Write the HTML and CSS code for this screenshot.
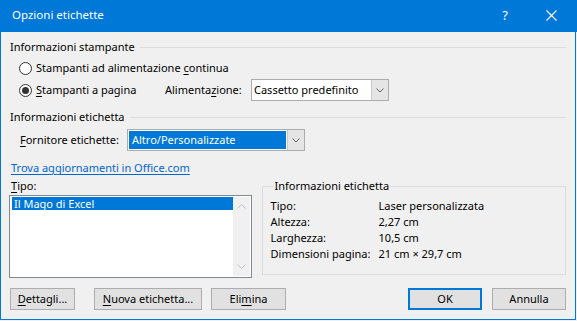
FILE: index.html
```html
<!DOCTYPE html>
<html lang="it">
<head>
<meta charset="utf-8">
<title>Opzioni etichette</title>
<link rel="stylesheet" href="styles.css">
</head>
<body>
<div class="dialog">
  <div class="titlebar">
    <span class="title">Opzioni etichette</span>
    <span class="tb-help">?</span>
    <span class="tb-close">
      <svg width="11" height="11" viewBox="0 0 11 11"><path d="M0.5 0.5 L10.5 10.5 M10.5 0.5 L0.5 10.5" stroke="#fff" stroke-width="1.1" fill="none"/></svg>
    </span>
  </div>
  <div class="content">
    <div class="section s1">
      <span class="section-text">Informazioni stampante</span>
      <span class="rule"></span>
    </div>
    <div class="radio-row r1">
      <span class="radio"></span>
      <span class="radio-label">Stampanti ad alimentazione <u>c</u>ontinua</span>
    </div>
    <div class="radio-row r2">
      <span class="radio checked"></span>
      <span class="radio-label fixed"><u>S</u>tampanti a pagina</span>
      <span class="field-label feed">Alimenta<u>z</u>ione:</span>
      <div class="combo feed-combo">
        <span class="combo-field">Cassetto predefinito</span>
        <span class="combo-btn"><svg width="8" height="5" viewBox="0 0 8 5"><path d="M0.5 0.5 L4 4 L7.5 0.5" stroke="#606060" fill="none"/></svg></span>
      </div>
    </div>
    <div class="section s2">
      <span class="section-text">Informazioni etichetta</span>
      <span class="rule"></span>
    </div>
    <div class="vendor-row">
      <span class="field-label vendor"><u>F</u>ornitore etichette:</span>
      <div class="combo vendor-combo">
        <span class="combo-field"><span class="sel">Altro/Personalizzate</span></span>
        <span class="combo-btn"><svg width="8" height="5" viewBox="0 0 8 5"><path d="M0.5 0.5 L4 4 L7.5 0.5" stroke="#606060" fill="none"/></svg></span>
      </div>
    </div>
    <a class="link" href="#">Trova aggiornamenti in Office.com</a>
    <div class="lower">
      <div class="type-col">
        <span class="type-label"><u>T</u>ipo:</span>
        <div class="listbox">
          <div class="items">
            <div class="item selected">Il Mago di Excel</div>
          </div>
          <div class="scrollbar">
            <svg width="9" height="5" viewBox="0 0 9 5"><path d="M0.5 4.5 L4.5 0.5 L8.5 4.5" stroke="#c4c4c4" fill="none"/></svg>
            <svg width="9" height="5" viewBox="0 0 9 5"><path d="M0.5 0.5 L4.5 4.5 L8.5 0.5" stroke="#c4c4c4" fill="none"/></svg>
          </div>
        </div>
      </div>
      <fieldset class="info">
        <legend>Informazioni etichetta</legend>
        <div class="info-grid">
          <span>Tipo:</span><span>Laser personalizzata</span>
          <span>Altezza:</span><span>2,27 cm</span>
          <span>Larghezza:</span><span>10,5 cm</span>
          <span>Dimensioni pagina:</span><span>21 cm × 29,7 cm</span>
        </div>
      </fieldset>
    </div>
    <div class="buttons">
      <button class="btn b-det"><u>D</u>ettagli...</button>
      <button class="btn b-new"><u>N</u>uova etichetta...</button>
      <button class="btn b-del">Eli<u>m</u>ina</button>
      <span class="spacer"></span>
      <button class="btn b-ok default">OK</button>
      <button class="btn b-cancel">Annulla</button>
    </div>
  </div>
</div>
</body>
</html>
```

FILE: styles.css
```css
* { box-sizing: border-box; }
html, body {
  margin: 0;
  padding: 0;
  background: #f0f0f0;
  width: 577px;
  height: 321px;
  overflow: hidden;
}
body {
  font-family: "Noto Sans", "Open Sans", sans-serif;
  font-size: 11px;
  line-height: 16px;
  color: #000;
}
u { text-decoration: underline; text-underline-offset: 2px; text-decoration-thickness: 1px; }

.dialog {
  width: 577px;
  display: flex;
  flex-direction: column;
}
.titlebar {
  height: 32px;
  background: #0078d7;
  color: #fff;
  display: flex;
  align-items: center;
  padding-bottom: 2px;
}
.title {
  font-size: 11.5px;
  padding-left: 12px;
  flex: 1;
}
.tb-help {
  width: 30px;
  text-align: center;
  font-size: 13px;
}
.tb-close {
  width: 30px;
  margin-left: 16px;
  margin-right: 11px;
  display: flex;
  justify-content: center;
}
.tb-close svg { display: block; }

.content {
  width: 576px;
  height: 288px;
  border: 1px solid #0078d7;
  border-top: none;
  padding: 0 9px 0 8px;
  display: flex;
  flex-direction: column;
}

.section {
  height: 16px;
  display: flex;
  align-items: center;
  padding-left: 1px;
}
.s1 { margin-top: 7px; }
.s2 { margin-top: 8px; }
.rule {
  flex: 1;
  height: 1px;
  background: #dcdcdc;
  margin-left: 5px;
}

.radio-row {
  display: flex;
  align-items: center;
  padding-left: 10px;
}
.r1 { height: 16px; margin-top: 5px; }
.r2 { height: 22px; margin-top: 3px; }
.radio {
  width: 13px;
  height: 13px;
  border: 1px solid #333;
  border-radius: 50%;
  background: #fff;
  display: flex;
  align-items: center;
  justify-content: center;
  margin-right: 4px;
}
.radio.checked::after {
  content: "";
  width: 7px;
  height: 7px;
  border-radius: 50%;
  background: #333;
}
.radio-label.fixed { width: 129px; }
.field-label.feed { width: 86px; }

.combo {
  height: 22px;
  border: 1px solid #adadad;
  background: #fff;
  display: flex;
}
.feed-combo { width: 138px; }
.combo-field {
  flex: 1;
  display: flex;
  align-items: center;
  padding-left: 2px;
}
.combo-btn {
  width: 17px;
  background: #e5e5e5;
  border-left: 1px solid #c8c8c8;
  display: flex;
  align-items: center;
  justify-content: center;
}
.combo-btn svg { display: block; }

.vendor-row {
  height: 22px;
  margin-top: 4px;
  display: flex;
  align-items: center;
  padding-left: 11px;
}
.field-label.vendor { width: 107px; }
.vendor-combo { width: 178px; }
.vendor-combo .combo-field { padding: 1px; }
.sel {
  flex: 1;
  align-self: stretch;
  background: #0078d7;
  color: #fff;
  padding-left: 3px;
  display: flex;
  align-items: center;
}

.link {
  margin-top: 9px;
  height: 16px;
  padding-left: 2px;
  color: #0066cc;
  text-decoration: underline;
  text-underline-offset: 2px;
  align-self: flex-start;
}

.lower {
  margin-top: 2px;
  display: flex;
  align-items: flex-start;
}
.type-col {
  width: 243px;
  display: flex;
  flex-direction: column;
}
.type-label { height: 17px; padding-left: 2px; }
.listbox {
  height: 83px;
  border: 1px solid #828790;
  background: #fff;
  padding: 1px;
  display: flex;
}
.items { flex: 1; padding-left: 1px; }
.item {
  height: 13px;
  line-height: 13px;
  padding-left: 2px;
}
.item.selected { background: #0078d7; color: #fff; }
.scrollbar {
  width: 17px;
  background: #f0f0f0;
  display: flex;
  flex-direction: column;
  align-items: center;
  justify-content: space-between;
  padding: 7px 0 7px;
}
.scrollbar svg { display: block; }

.info {
  margin: 0 0 0 10px;
  width: 305px;
  height: 97px;
  border: 1px solid #dcdcdc;
  padding: 4px 8px 0 8px;
}
.info legend {
  padding: 0 1px;
  margin-left: 3px;
  line-height: 16px;
}
.info-grid {
  display: grid;
  grid-template-columns: 108px auto;
  grid-auto-rows: 16px;
}

.buttons {
  margin-top: 10px;
  display: flex;
  align-items: center;
  padding-left: 1px;
}
.btn {
  height: 22px;
  font-family: inherit;
  font-size: 11px;
  color: #000;
  background: #e1e1e1;
  border: 1px solid #adadad;
  padding: 0;
  margin: 0;
  line-height: 18px;
}
.b-det { width: 65px; }
.b-new { width: 108px; margin-left: 19px; }
.b-del { width: 75px; margin-left: 9px; }
.spacer { flex: 1; }
.b-ok { width: 74px; }
.b-cancel { width: 74px; margin-left: 10px; }
.btn.default { border: 2px solid #0078d7; }
```
